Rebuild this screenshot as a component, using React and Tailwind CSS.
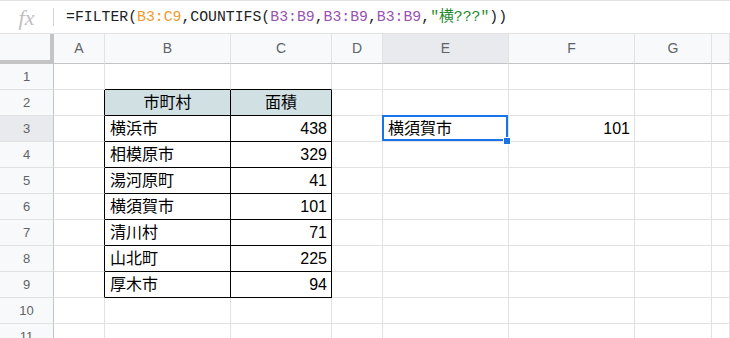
import React from "react";

const COLS = ["A", "B", "C", "D", "E", "F", "G", ""];
const ROWS = 11;

const table = [
  ["市町村", "面積"],
  ["横浜市", "438"],
  ["相模原市", "329"],
  ["湯河原町", "41"],
  ["横須賀市", "101"],
  ["清川村", "71"],
  ["山北町", "225"],
  ["厚木市", "94"],
];

const cellFont = { fontFamily: '"Liberation Sans", "Noto Sans CJK JP", sans-serif' };

function Cell({ row, col }) {
  // row is 1-based, col index 0 = A
  const inTable = row >= 2 && row <= 9 && (col === 1 || col === 2);
  const leftOfTable = row >= 2 && row <= 9 && col === 0;
  const aboveTable = row === 1 && (col === 1 || col === 2);
  const right = inTable || leftOfTable ? "border-r-black" : "border-r-[#e2e2e2]";
  const bottom = inTable || aboveTable ? "border-b-black" : "border-b-[#e2e2e2]";
  const header = row === 2 && inTable;
  let text = null;
  let align = "justify-start pl-[5px]";
  if (inTable) {
    text = table[row - 2][col - 1];
    if (header) align = "justify-center";
    else if (col === 2) align = "justify-end pr-[4px]";
  }
  const selected = row === 3 && col === 4;
  if (selected) text = "横須賀市";
  if (row === 3 && col === 5) {
    text = "101";
    align = "justify-end pr-[4px]";
  }
  return (
    <div className={`relative flex items-center border-r border-b ${right} ${bottom} ${header ? "bg-[#d0e0e3]" : "bg-white"} ${align} text-[16px] text-black ${selected ? "z-10" : ""}`} style={cellFont}>
      {text}
      {selected && (
        <div className="absolute -left-px -top-px right-0 bottom-0 border-2 border-[#1a73e8]">
          <div className="absolute -right-[5px] -bottom-[6px] h-[8px] w-[8px] border border-white bg-[#1a73e8]" />
        </div>
      )}
    </div>
  );
}

export default function App() {
  const rows = [];
  for (let r = 1; r <= ROWS; r++) {
    rows.push(
      <div key={`h${r}`} className={`flex items-center justify-center border-r border-b border-r-[#c4c4c4] border-b-[#e2e2e2] text-[13px] text-[#5f6368] ${r === 3 ? "bg-[#e8eaed]" : "bg-[#f8f9fa]"}`} style={{ fontFamily: '"Liberation Sans", sans-serif' }}>
        {r}
      </div>
    );
    COLS.forEach((c, i) => rows.push(<Cell key={`${i}-${r}`} row={r} col={i} />));
  }

  return (
    <div className="h-[338px] w-[730px] overflow-hidden bg-white">
      <div className="flex h-[34px] items-center border-t border-b border-[#e2e2e2]">
        <div className="flex w-[53px] justify-center text-[22px] italic text-[#c0c0c0]" style={{ fontFamily: '"Liberation Serif", serif' }}>
          fx
        </div>
        <div className="h-[18px] w-px bg-[#d5d5d5]" />
        <div className="whitespace-nowrap pl-[12px] text-[14.8px] text-[#202124]" style={{ fontFamily: '"Liberation Mono", "Noto Sans CJK JP", monospace' }}>
          =FILTER(<span className="text-[#f19a2c]">B3:C9</span>,COUNTIFS(<span className="text-[#9a52b0]">B3:B9</span>,<span className="text-[#9a52b0]">B3:B9</span>,<span className="text-[#9a52b0]">B3:B9</span>,<span className="text-[#1e8a2e]">"横???"</span>))
        </div>
      </div>
      <div className="grid grid-cols-[54px_51px_126px_101px_51px_126px_126px_77px_1fr] grid-rows-[30px_repeat(11,26px)]">
        <div className="border-r-4 border-b-4 border-[#c4c4c4] bg-[#f8f9fa]" />
        {COLS.map((c, i) => (
          <div key={i} className={`flex items-center justify-center border-r border-b border-r-[#e2e2e2] border-b-[#c4c4c4] text-[14px] text-[#5f6368] ${c === "E" ? "bg-[#e8eaed]" : "bg-[#f8f9fa]"}`} style={{ fontFamily: '"Liberation Sans", sans-serif' }}>
            {c}
          </div>
        ))}
        {rows}
      </div>
    </div>
  );
}
